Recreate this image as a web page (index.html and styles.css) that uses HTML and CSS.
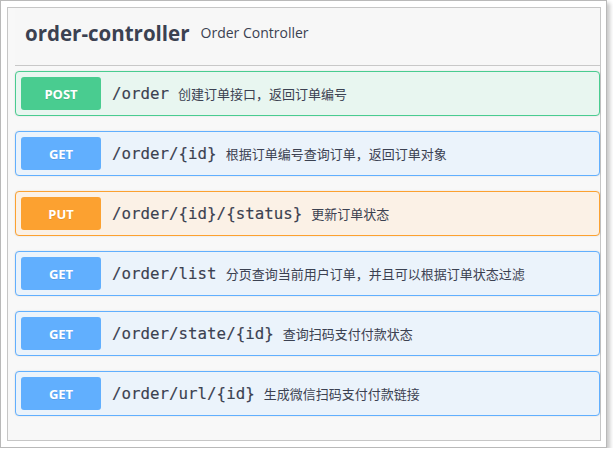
FILE: index.html
```html
<!DOCTYPE html>
<html lang="zh-CN">
<head>
<meta charset="utf-8">
<title>order-controller</title>
<link rel="stylesheet" href="styles.css">
</head>
<body>
<div class="frame">
  <div class="panel">
    <div class="tag">
      <div class="tag-row">
        <span class="tag-name">order-controller</span>
        <span class="tag-desc">Order Controller</span>
      </div>
    </div>
    <div class="ops">
      <div class="op op-post">
        <span class="method">POST</span>
        <span class="path">/order</span>
        <span class="summary">创建订单接口，返回订单编号</span>
      </div>
      <div class="op op-get">
        <span class="method">GET</span>
        <span class="path">/order/{id}</span>
        <span class="summary">根据订单编号查询订单，返回订单对象</span>
      </div>
      <div class="op op-put">
        <span class="method">PUT</span>
        <span class="path">/order/{id}/{status}</span>
        <span class="summary">更新订单状态</span>
      </div>
      <div class="op op-get">
        <span class="method">GET</span>
        <span class="path">/order/list</span>
        <span class="summary">分页查询当前用户订单，并且可以根据订单状态过滤</span>
      </div>
      <div class="op op-get">
        <span class="method">GET</span>
        <span class="path">/order/state/{id}</span>
        <span class="summary">查询扫码支付付款状态</span>
      </div>
      <div class="op op-get">
        <span class="method">GET</span>
        <span class="path">/order/url/{id}</span>
        <span class="summary">生成微信扫码支付付款链接</span>
      </div>
    </div>
  </div>
</div>
</body>
</html>
```

FILE: styles.css
```css
* { box-sizing: border-box; }
html, body { margin: 0; padding: 0; background: #ffffff; }
body {
  font-family: "Open Sans", "Noto Sans CJK SC", sans-serif;
  color: #3b4151;
}
.frame {
  width: 607px;
  height: 448px;
  border: 1px solid #b9b9b9;
  background: #ffffff;
  padding: 6px 5px 6px 6px;
  box-shadow: 3px 3px 4px rgba(0, 0, 0, 0.22);
}
.panel {
  height: 434px;
  border: 1px solid #c6c6c6;
  background: #f8f8f8;
  padding: 0 0 0 7px;
}
.tag {
  height: 58px;
  border-bottom: 1px solid #c8c8c8;
  padding: 11px 10px 0 10px;
  background: #f7f7f7;
}
.tag-row {
  display: flex;
  align-items: center;
}
.tag-name {
  font-family: "Open Sans", sans-serif;
  font-weight: 700;
  font-size: 20.5px;
  line-height: 28px;
  color: #3b4151;
}
.tag-desc {
  font-family: "Open Sans", sans-serif;
  font-size: 14px;
  margin-left: 11px;
  margin-top: -2px;
  color: #3b4151;
}
.ops {
  display: flex;
  flex-direction: column;
  gap: 15px;
  padding-top: 5px;
}
.op {
  height: 45px;
  border: 1px solid;
  border-radius: 4px;
  padding: 5px;
  display: flex;
  align-items: center;
  box-shadow: 0 0 2px rgba(0, 0, 0, 0.12);
}
.op-post { border-color: #49cc90; background: #e8f6f0; }
.op-get { border-color: #61affe; background: #ebf3fb; }
.op-put { border-color: #fca130; background: #fbf1e6; }
.method {
  width: 80px;
  height: 33px;
  border-radius: 3px;
  display: flex;
  align-items: center;
  justify-content: center;
  color: #ffffff;
  font-family: "Open Sans", sans-serif;
  font-weight: 700;
  font-size: 13px;
  text-shadow: 0 1px 0 rgba(0, 0, 0, 0.1);
  flex: none;
}
.op-post .method { background: #49cc90; }
.op-get .method { background: #61affe; }
.op-put .method { background: #fca130; }
.path {
  margin-left: 11px;
  font-family: "DejaVu Sans Mono", monospace;
  font-size: 15.8px;
  color: #3b4151;
  -webkit-text-stroke: 0.15px #3b4151;
}
.summary {
  margin-left: 9px;
  font-family: "Noto Sans CJK SC", sans-serif;
  font-size: 13px;
  color: #3b4151;
}
```
